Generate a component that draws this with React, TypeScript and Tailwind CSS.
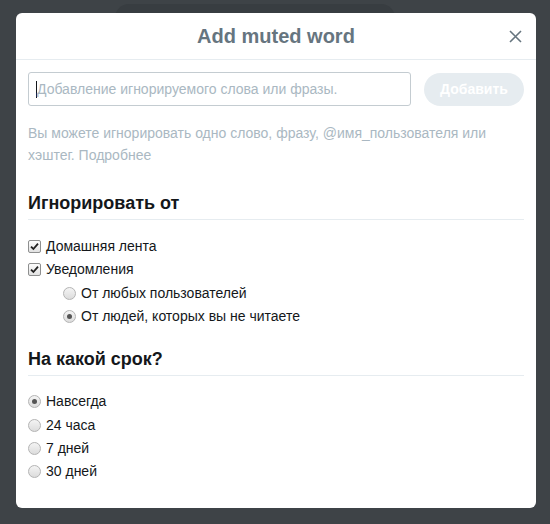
import React from "react";

function Check() {
  return (
    <span className="flex h-[13px] w-[13px] items-center justify-center rounded-[2px] border border-[#8e8f8f] bg-gradient-to-b from-[#fdfdfd] to-[#e2e2e2]">
      <svg width="9" height="9" viewBox="0 0 9 9">
        <path d="M1 4.6 L3.4 7 L8 1.6" fill="none" stroke="#222" strokeWidth="1.8" />
      </svg>
    </span>
  );
}

function Radio({ on }: { on?: boolean }) {
  return (
    <span className="flex h-[13px] w-[13px] items-center justify-center rounded-full border border-[#b4b4b4] bg-gradient-to-b from-[#f4f4f4] to-[#dcdcdc]">
      {on && <span className="h-[5px] w-[5px] rounded-full bg-[#555]" />}
    </span>
  );
}

function Row({ children, indent, box }: { children: React.ReactNode; indent?: boolean; box: React.ReactNode }) {
  return (
    <div className={`flex h-[23.3px] items-center gap-[5px] ${indent ? "pl-[35px]" : ""}`}>
      {box}
      <span className="text-[14px] text-[#14171a]">{children}</span>
    </div>
  );
}

export default function App() {
  return (
    <div className="relative h-[524px] w-[550px] overflow-hidden bg-[#3e4347] pl-[16px] pt-[13px] font-['Liberation_Sans',Arial,sans-serif]">
      <div className="absolute left-[115px] top-[4px] h-[30px] w-[280px] rounded-[14px] bg-[#383d41]" />
      <div className="relative h-[495px] w-[520px] rounded-[6px] bg-white">
        <div className="relative flex h-[47px] items-center justify-center border-b border-[#e6ecf0]">
          <h2 className="text-[20px] font-bold text-[#66757f]">Add muted word</h2>
          <svg className="absolute right-[14px] top-[17px]" width="13" height="13" viewBox="0 0 13 13">
            <path d="M1 1 L12 12 M12 1 L1 12" stroke="#66757f" strokeWidth="1.6" />
          </svg>
        </div>
        <div className="px-3">
          <div className="mt-[12px] flex items-center gap-[13px]">
            <div className="flex h-[34px] w-[383px] items-center rounded-[3px] border border-[#c4ccd1] px-[7px]">
              <span className="h-[17px] w-px bg-[#14171a]" />
              <span className="text-[14px] text-[#aab8c2]">Добавление игнорируемого слова или фразы.</span>
            </div>
            <button className="h-[33px] w-[100px] rounded-full bg-[#e6ecf0] text-[14px] font-bold text-white">
              Добавить
            </button>
          </div>
          <p className="mt-[16px] text-[14px] leading-[22px] text-[#aab8c2]">
            Вы можете игнорировать одно слово, фразу, @имя_пользователя или хэштег. Подробнее
          </p>
          <h3 className="mt-[25px] border-b border-[#e6ecf0] pb-[4px] text-[18px] font-bold leading-[24px] text-[#14171a]">
            Игнорировать от
          </h3>
          <div className="mt-[15px]">
            <Row box={<Check />}>Домашняя лента</Row>
            <Row box={<Check />}>Уведомления</Row>
            <Row indent box={<Radio />}>От любых пользователей</Row>
            <Row indent box={<Radio on />}>От людей, которых вы не читаете</Row>
          </div>
          <h3 className="mt-[19px] border-b border-[#e6ecf0] pb-[4px] text-[18px] font-bold leading-[24px] text-[#14171a]">
            На какой срок?
          </h3>
          <div className="mt-[14px]">
            <Row box={<Radio on />}>Навсегда</Row>
            <Row box={<Radio />}>24 часа</Row>
            <Row box={<Radio />}>7 дней</Row>
            <Row box={<Radio />}>30 дней</Row>
          </div>
        </div>
      </div>
    </div>
  );
}
